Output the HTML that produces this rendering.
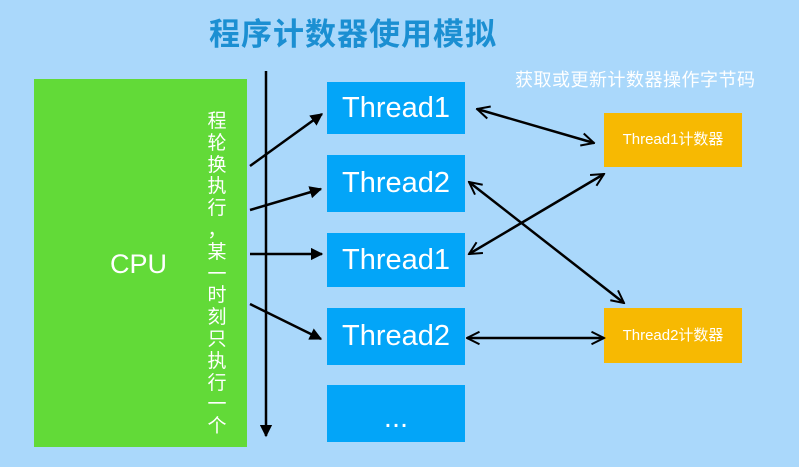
<!DOCTYPE html>
<html><head><meta charset="utf-8"><style>
html,body{margin:0;padding:0}
body{width:799px;height:467px;background:#aad8fb;position:relative;overflow:hidden;font-family:"Liberation Sans","Noto Sans CJK SC",sans-serif}
.a{position:absolute}
.title{left:203px;top:15px;width:300px;text-align:center;font-size:31px;letter-spacing:1px;font-weight:bold;color:#1b8fd2;line-height:40px;white-space:nowrap}
.sub{left:515px;top:68px;font-size:18px;letter-spacing:0.5px;color:#fff;white-space:nowrap;line-height:24px}
.cpu{left:34px;top:79px;width:213px;height:368px;background:#62da38}
.cputxt{left:110px;top:249px;font-size:27px;color:#fff;line-height:30px}
.vt{left:205px;top:111px;width:24px;font-size:19px;color:#fff;line-height:21.8px;text-align:center}
.b{background:#03a5f8;color:#fff;font-size:29px;text-align:center;left:327px;width:138px}
.o{background:#f7b902;color:#fff;font-size:15px;text-align:center;left:604px;width:138px}
</style></head><body>
<div class="a title">程序计数器使用模拟</div>
<div class="a sub">获取或更新计数器操作字节码</div>
<div class="a cpu"></div>
<div class="a cputxt">CPU</div>
<div class="a vt">程<br>轮<br>换<br>执<br>行<br>，<br>某<br>一<br>时<br>刻<br>只<br>执<br>行<br>一<br>个</div>
<div class="a b" style="top:82px;height:52px;line-height:52px">Thread1</div>
<div class="a b" style="top:155px;height:57px;line-height:57px">Thread2</div>
<div class="a b" style="top:233px;height:54px;line-height:54px">Thread1</div>
<div class="a b" style="top:308px;height:57px;line-height:57px">Thread2</div>
<div class="a b" style="top:385px;height:57px;line-height:66px">...</div>
<div class="a o" style="top:113px;height:54px;line-height:54px">Thread1计数器</div>
<div class="a o" style="top:308px;height:55px;line-height:55px">Thread2计数器</div>
<svg class="a" style="left:0;top:0" width="799" height="467">
<defs><marker id="m" viewBox="0 0 10 10" refX="9" refY="5" markerWidth="5" markerHeight="5" orient="auto-start-reverse"><path d="M0,0L10,5L0,10z" fill="#000"/></marker>
<marker id="n" viewBox="0 0 12 12" refX="11" refY="6" markerWidth="6" markerHeight="6" orient="auto-start-reverse"><path d="M1,1L11,6L1,11" fill="none" stroke="#000" stroke-width="1.6"/></marker></defs>
<g stroke="#000" stroke-width="2.5" fill="none">
<line x1="266" y1="71" x2="266" y2="436" marker-end="url(#m)"/>
<line x1="250" y1="166" x2="322" y2="114" marker-end="url(#m)"/>
<line x1="250" y1="210" x2="321" y2="189" marker-end="url(#m)"/>
<line x1="250" y1="254" x2="322" y2="254" marker-end="url(#m)"/>
<line x1="250" y1="304" x2="321" y2="339" marker-end="url(#m)"/>
<line x1="477" y1="109" x2="594" y2="143" marker-start="url(#n)" marker-end="url(#n)"/>
<line x1="469" y1="182" x2="624" y2="303" marker-start="url(#n)" marker-end="url(#n)"/>
<line x1="469" y1="254" x2="604" y2="174" marker-start="url(#n)" marker-end="url(#n)"/>
<line x1="467" y1="338" x2="604" y2="338" marker-start="url(#n)" marker-end="url(#n)"/>
</g></svg>
</body></html>
